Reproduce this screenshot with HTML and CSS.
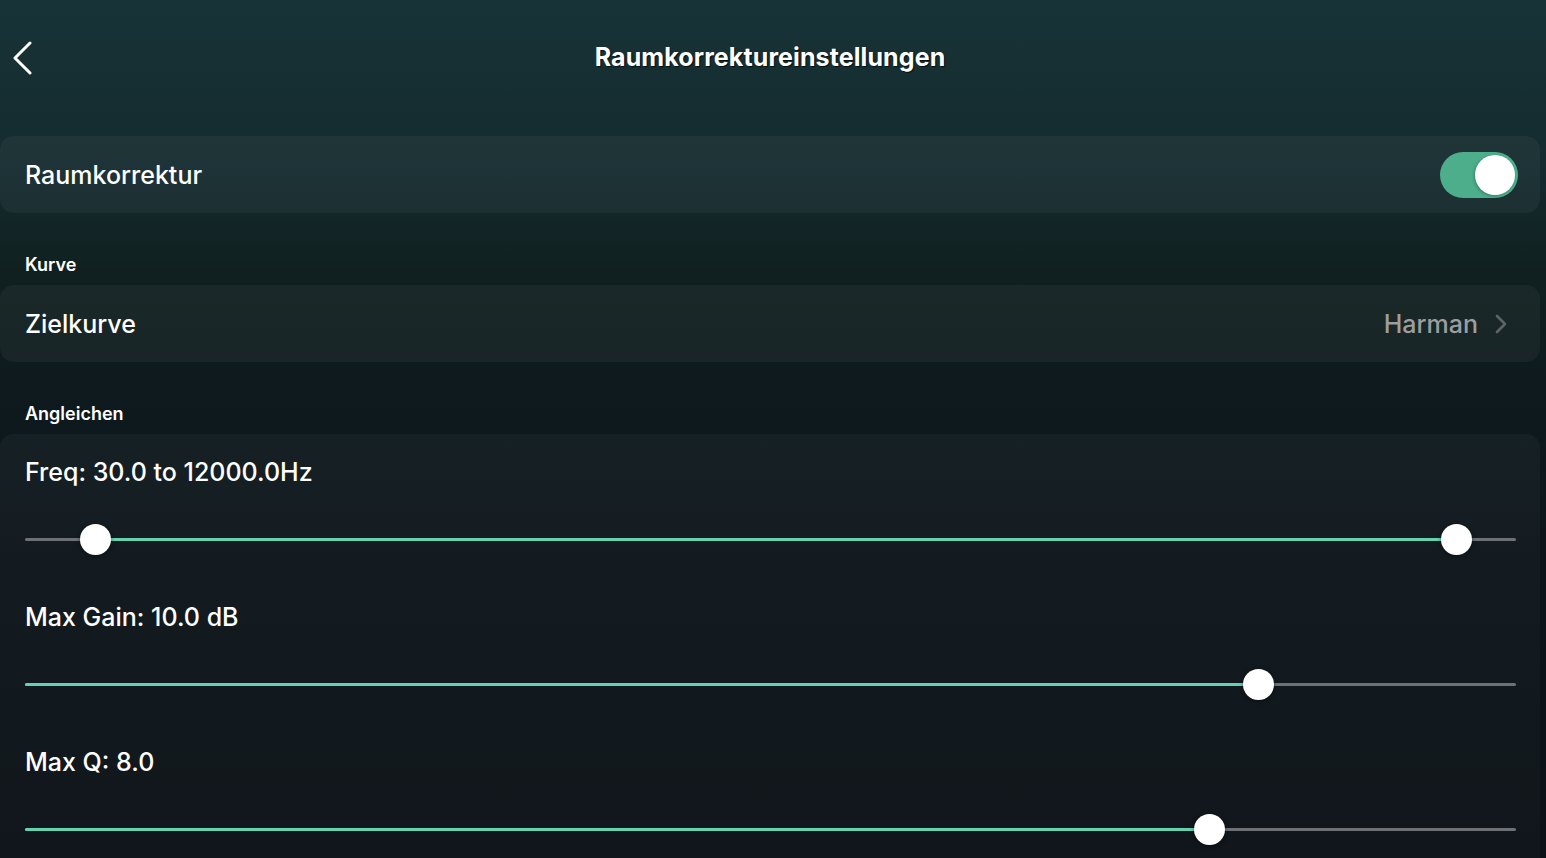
FILE: index.html
```html
<!DOCTYPE html>
<html lang="de">
<head>
    <meta charset="UTF-8">
    <meta name="viewport" content="width=device-width, initial-scale=1.0">
    <title>Raumkorrektureinstellungen</title>
    <link rel="stylesheet" href="styles.css">
</head>
<body>
<header class="topbar">
    <button class="back" aria-label="Zurück">
        <svg width="22" height="34" viewBox="0 0 22 34"><path d="M19 2 L4 17 L19 32" fill="none" stroke="#fff" stroke-width="3" stroke-linecap="round" stroke-linejoin="round"/></svg>
    </button>
    <h1>Raumkorrektureinstellungen</h1>
</header>

<main class="content">
    <!-- Toggle -->
    <section class="card row">
        <span class="row-title">Raumkorrektur</span>
        <div class="switch on"><span class="knob"></span></div>
    </section>

    <h2 class="section-label">Kurve</h2>
    <section class="card row link-row">
        <span class="row-title">Zielkurve</span>
        <span class="row-value">Harman
            <svg width="14" height="22" viewBox="0 0 14 22"><path d="M3 3 L11 11 L3 19" fill="none" stroke="#5c6466" stroke-width="2.6" stroke-linecap="round" stroke-linejoin="round"/></svg>
        </span>
    </section>

    <h2 class="section-label">Angleichen</h2>
    <section class="card eq">
        <div class="slider-group">
            <div class="slider-label">Freq: 30.0 to 12000.0Hz</div>
            <div class="slider">
                <div class="track"></div>
                <div class="fill" style="left: 4.7%; width: 91.3%;"></div>
                <span class="thumb" style="left: 4.7%;"></span>
                <span class="thumb" style="left: 96%;"></span>
            </div>
        </div>
        <div class="slider-group">
            <div class="slider-label">Max Gain: 10.0 dB</div>
            <div class="slider">
                <div class="track"></div>
                <div class="fill" style="left: 0; width: 82.7%;"></div>
                <span class="thumb" style="left: 82.7%;"></span>
            </div>
        </div>
        <div class="slider-group">
            <div class="slider-label">Max Q: 8.0</div>
            <div class="slider">
                <div class="track"></div>
                <div class="fill" style="left: 0; width: 79.4%;"></div>
                <span class="thumb" style="left: 79.4%;"></span>
            </div>
        </div>
    </section>
</main>
</body>
</html>
```

FILE: styles.css
```css
* {
    margin: 0;
    padding: 0;
    box-sizing: border-box;
}
html, body {
    height: 100%;
}
body {
    font-family: Inter, 'Noto Sans', 'Liberation Sans', sans-serif;
    color: #ffffff;
    background: linear-gradient(180deg, #173337 0%, #142a2e 20%, #10201f 32%, #0e1a1e 45%, #0c1419 65%, #0b1116 100%);
    overflow: hidden;
}
.topbar {
    height: 136px;
    display: flex;
    justify-content: center;
    padding-top: 40px;
    position: relative;
}
.topbar h1 {
    font-size: 25px;
    font-weight: 700;
    line-height: 34px;
    letter-spacing: 0.1px;
    text-shadow: 1px 1px 1px rgba(0,0,0,0.7);
    margin-right: 6px;
}
.back {
    position: absolute;
    left: 11px;
    top: 41px;
    background: none;
    border: none;
    cursor: pointer;
}
.content {
    padding-right: 6px;
}
.card {
    background: rgba(255, 255, 255, 0.045);
    border-radius: 14px;
}
.row {
    height: 77px;
    display: flex;
    align-items: center;
    justify-content: space-between;
    padding: 0 22px 0 25px;
}
.link-row {
    padding-right: 32px;
}
.row-title {
    font-size: 25px;
    font-weight: 500;
}
.row-value {
    display: flex;
    align-items: center;
    gap: 16px;
    font-size: 25px;
    font-weight: 500;
    color: #9c9fa0;
}
.switch {
    width: 78px;
    height: 46px;
    border-radius: 23px;
    background: #4cae8a;
    position: relative;
}
.switch .knob {
    position: absolute;
    right: 3px;
    top: 3px;
    width: 40px;
    height: 40px;
    border-radius: 50%;
    background: #ffffff;
    box-shadow: -1px 1px 3px rgba(0,0,0,0.25);
}
.section-label {
    font-size: 18px;
    font-weight: 600;
    line-height: 24px;
    padding: 40px 0 8px 25px;
}
.eq {
    padding: 23px 24px 40px 25px;
    border-bottom-left-radius: 0;
    border-bottom-right-radius: 0;
    min-height: 440px;
    background: linear-gradient(180deg, rgba(255,255,255,0.035), rgba(255,255,255,0.02));
}
.slider-group {
    margin-bottom: 40px;
}
.slider-label {
    font-size: 25px;
    font-weight: 500;
    line-height: 30px;
    margin-bottom: 31px;
}
.slider {
    position: relative;
    height: 44px;
}
.track, .fill {
    position: absolute;
    top: 20px;
    height: 3px;
    border-radius: 2px;
}
.track {
    left: 0;
    right: 0;
    background: #6d7074;
}
.fill {
    background: #62d2b0;
}
.thumb {
    position: absolute;
    top: 21px;
    width: 31px;
    height: 31px;
    margin: -15px 0 0 -15px;
    border-radius: 50%;
    background: #ffffff;
    box-shadow: 0 1px 4px rgba(0,0,0,0.5);
}
```
